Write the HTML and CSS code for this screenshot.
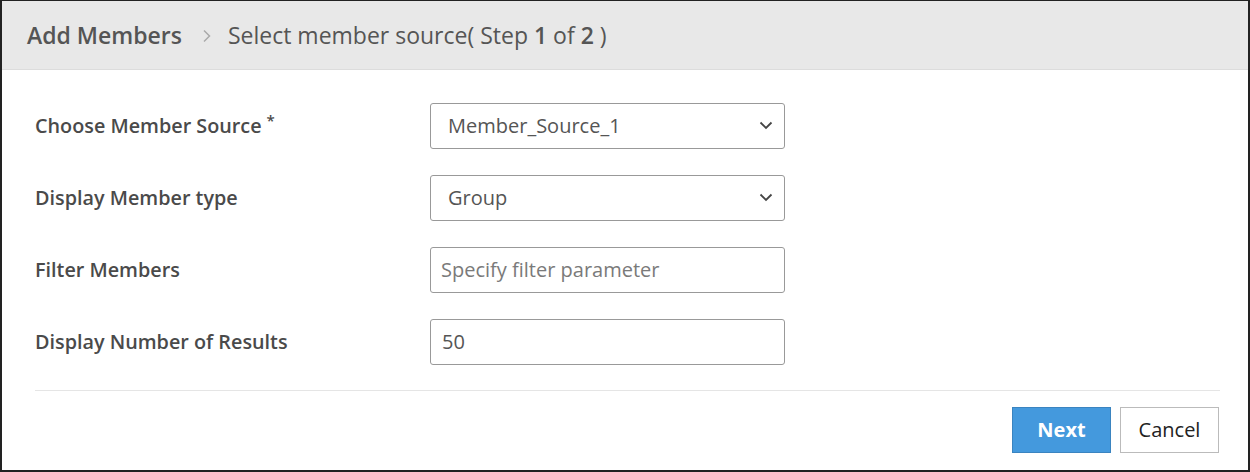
FILE: index.html
```html
<!DOCTYPE html>
<html>
<head>
<meta charset="utf-8">
<link rel="stylesheet" href="styles.css">
</head>
<body>
<div class="dialog">
  <div class="header">
    <span class="title">Add Members</span>
    <svg class="crumb" width="10" height="14" viewBox="0 0 10 14"><path d="M2 1.5 L7.5 7 L2 12.5" fill="none" stroke="#aaa" stroke-width="1.5"/></svg>
    <span class="step">Select member source( Step <b>1</b> of <b>2</b> )</span>
  </div>
  <div class="content">
    <div class="form">
      <div class="row">
        <label class="label">Choose Member Source<sup class="req">*</sup></label>
        <div class="field select">
          <span class="value">Member_Source_1</span>
          <svg class="chev" width="14" height="9" viewBox="0 0 14 9"><path d="M1.5 1.5 L7 7 L12.5 1.5" fill="none" stroke="#444" stroke-width="1.8"/></svg>
        </div>
      </div>
      <div class="row">
        <label class="label">Display Member type</label>
        <div class="field select">
          <span class="value">Group</span>
          <svg class="chev" width="14" height="9" viewBox="0 0 14 9"><path d="M1.5 1.5 L7 7 L12.5 1.5" fill="none" stroke="#444" stroke-width="1.8"/></svg>
        </div>
      </div>
      <div class="row">
        <label class="label">Filter Members</label>
        <div class="field">
          <span class="placeholder">Specify filter parameter</span>
        </div>
      </div>
      <div class="row">
        <label class="label">Display Number of Results</label>
        <div class="field">
          <span class="value">50</span>
        </div>
      </div>
    </div>
    <div class="footer">
      <button class="btn primary">Next</button>
      <button class="btn secondary">Cancel</button>
    </div>
  </div>
</div>
</body>
</html>
```
FILE: styles.css
```css
html, body {
  margin: 0;
  padding: 0;
  background: #fff;
}
body {
  font-family: "Open Sans", "Liberation Sans", sans-serif;
}
.dialog {
  width: 1250px;
  height: 472px;
  box-sizing: border-box;
  border: 2px solid #222;
  border-top: 1px solid #222;
  background: #fff;
  display: flex;
  flex-direction: column;
}
.header {
  height: 68px;
  background: #e8e8e8;
  border-bottom: 1px solid #dcdcdc;
  display: flex;
  align-items: center;
  padding-left: 25px;
  color: #555;
  font-size: 23px;
}
.title {
  font-weight: 600;
}
.crumb {
  margin: 2px 16px 0 20px;
}
.step {
  font-weight: 400;
}
.step b {
  font-weight: 600;
}
.content {
  padding: 33px 28px 0 33px;
}
.form {
  display: flex;
  flex-direction: column;
  gap: 26.5px;
  padding-bottom: 25px;
  border-bottom: 1px solid #e5e5e5;
}
.row {
  display: flex;
  align-items: center;
}
.label {
  width: 395px;
  font-size: 19.8px;
  font-weight: 600;
  color: #4a4a4a;
}
.req {
  font-size: 15px;
  margin-left: 5px;
  vertical-align: 7px;
  line-height: 0;
}
.field {
  width: 355px;
  height: 45.5px;
  box-sizing: border-box;
  border: 1px solid #999;
  border-radius: 3px;
  display: flex;
  align-items: center;
  justify-content: space-between;
  padding: 0 11px 0 17px;
  font-size: 20px;
}
.value {
  color: #555;
}
.placeholder {
  color: #7a7a7a;
  margin-left: -7px;
}
.field .value:only-child {
  margin-left: -6px;
}
.chev {
  display: block;
}
.footer {
  display: flex;
  justify-content: flex-end;
  gap: 9px;
  padding-top: 16px;
  padding-right: 1px;
}
.btn {
  width: 99px;
  height: 46px;
  font-family: "Open Sans", "Liberation Sans", sans-serif;
  font-size: 20px;
  border-radius: 0;
  cursor: pointer;
}
.primary {
  background: #4499dd;
  border: 1px solid #3a84c0;
  color: #fff;
  font-weight: 700;
}
.secondary {
  background: #fff;
  border: 1px solid #bbb;
  color: #222;
  font-weight: 400;
}
```
